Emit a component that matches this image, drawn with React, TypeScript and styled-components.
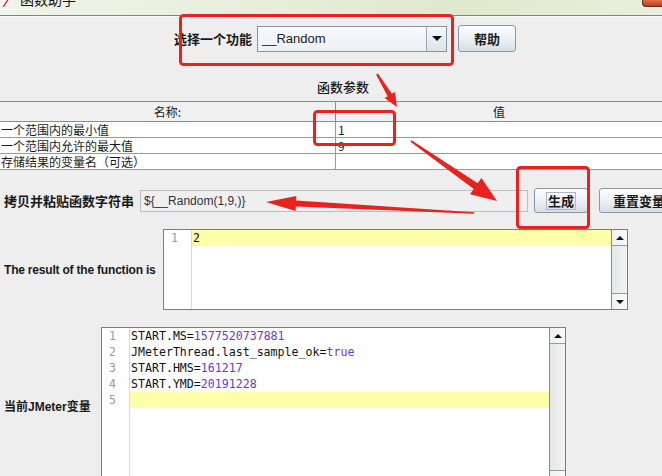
import React from "react";
import styled, { createGlobalStyle } from "styled-components";

const CJK = `"Noto Sans CJK SC", "Noto Sans", sans-serif`;
const SANS = `"Liberation Sans", "Noto Sans CJK SC", sans-serif`;
const MONO = `"DejaVu Sans Mono", "Liberation Mono", monospace`;

const GlobalStyle = createGlobalStyle`
  html, body {
    margin: 0;
    padding: 0;
    background: #eeeeee;
    overflow: hidden;
  }
`;

const Page = styled.div`
  position: relative;
  width: 662px;
  height: 476px;
  overflow: hidden;
  background: #eeeeee;
  color: #111;
`;

const TitleBar = styled.div`
  height: 15px;
  display: flex;
  align-items: flex-start;
  overflow: hidden;
  background: linear-gradient(90deg, #f1f4ea 0%, #e7eed9 40%, #dfe9cc 70%, #e9efdd 100%);
  border-bottom: 1px solid #7d8679;
  box-shadow: 0 1px 0 #fafafa;
`;

const TitleText = styled.span`
  margin: -9px 0 0 11px;
  font: 14px/16px ${CJK};
  color: #111;
`;

const CloseButton = styled.div`
  margin-left: auto;
  width: 19px;
  height: 6px;
  background: linear-gradient(#e0704a, #b9391f);
  border: 1px solid #6b2a1a;
  border-top: none;
  border-right: none;
  border-radius: 0 0 0 4px;
`;

const Row = styled.div<{ $top: number; $h?: number; $left?: number }>`
  display: flex;
  align-items: center;
  margin-top: ${(p) => p.$top}px;
  height: ${(p) => (p.$h ? `${p.$h}px` : "auto")};
  padding-left: ${(p) => p.$left ?? 4}px;
`;

const Label = styled.span<{ $w?: number; $latin?: boolean; $tight?: boolean }>`
  flex: none;
  width: ${(p) => (p.$w ? `${p.$w}px` : "auto")};
  font-family: ${(p) => (p.$latin ? SANS : CJK)};
  font-weight: 700;
  font-size: ${(p) => (p.$latin ? 12 : 13)}px;
  letter-spacing: ${(p) => (p.$tight ? "-0.2px" : "normal")};
  line-height: 16px;
  color: #1a1a1a;
  white-space: nowrap;
`;

const Combo = styled.div`
  margin-left: 5px;
  width: 190px;
  height: 26px;
  box-sizing: border-box;
  display: flex;
  border: 1px solid #8796a6;
  background: linear-gradient(#f7f9fb, #edf1f5);
`;

const ComboText = styled.span`
  flex: 1;
  padding-left: 4px;
  font: 13px/24px ${SANS};
  color: #1a1a1a;
`;

const ComboArrow = styled.div`
  width: 19px;
  display: flex;
  align-items: center;
  justify-content: center;
  border-left: 1px solid #9aa6b2;
  background: linear-gradient(#f6f8fa, #dde3ea);

  &::after {
    content: "";
    border-left: 5px solid transparent;
    border-right: 5px solid transparent;
    border-top: 5px solid #111;
  }
`;

const Button = styled.button<{ $w: number; $ml: number; $h?: number }>`
  flex: none;
  margin-left: ${(p) => p.$ml}px;
  width: ${(p) => p.$w}px;
  height: ${(p) => p.$h ?? 27}px;
  padding: 0;
  display: flex;
  align-items: center;
  justify-content: center;
  border: 1px solid #8797a8;
  border-radius: 3px;
  background: linear-gradient(#fdfeff 0%, #eef2f6 45%, #d6dee7 100%);
  font: 700 13px/16px ${CJK};
  color: #1a1a1a;
  white-space: nowrap;
  overflow: hidden;
`;

const FocusRing = styled.span`
  padding: 0 1px;
  border: 1px solid #a9b8c9;
`;

const SectionTitle = styled.div`
  margin-top: 27px;
  padding-left: 317px;
  font: 500 13px/16px ${CJK};
  color: #1a1a1a;
`;

const Table = styled.div`
  margin-top: 6px;
  display: grid;
  grid-template-columns: 336px 1fr;
  border-top: 1px solid #8c8c8c;
`;

const HeadCell = styled.div<{ $first?: boolean }>`
  height: 19px;
  display: flex;
  align-items: center;
  justify-content: center;
  background: #f0f0f0;
  border-bottom: 1px solid #8c8c8c;
  border-right: ${(p) => (p.$first ? "1px solid #8c8c8c" : "none")};
  font: 12px/15px ${CJK};
  color: #1a1a1a;
`;

const Cell = styled.div<{ $first?: boolean }>`
  height: 15px;
  padding-left: ${(p) => (p.$first ? 1 : 2)}px;
  background: #fff;
  border-bottom: 1px solid #9a9a9a;
  border-right: ${(p) => (p.$first ? "1px solid #9a9a9a" : "none")};
  font: 12px/15px ${CJK};
  color: #1a1a1a;
  white-space: nowrap;
  overflow: hidden;
`;

const Field = styled.div`
  flex: none;
  margin-left: 6px;
  width: 388px;
  height: 22px;
  box-sizing: border-box;
  padding-left: 3px;
  border: 1px solid #b8bfc7;
  background: #efefef;
  font: 12px/20px ${SANS};
  color: #333;
`;

const Editor = styled.div<{ $h: number }>`
  flex: none;
  margin-left: 6px;
  width: 465px;
  height: ${(p) => p.$h}px;
  box-sizing: border-box;
  display: flex;
  border: 1px solid #7d7d7d;
  background: #fff;
`;

const Gutter = styled.div`
  width: 27px;
  border-right: 1px solid #dadada;
  font: 11.5px/16px ${MONO};
  color: #9a9a9a;
  text-align: right;
`;

const GutterNum = styled.div`
  height: 16px;
  padding-right: 13px;
`;

const Code = styled.div`
  flex: 1;
  font: 11.6px/16px ${MONO};
  color: #111;
`;

const Line = styled.div<{ $hl?: boolean }>`
  height: 16px;
  padding-left: 1px;
  white-space: pre;
  background: ${(p) => (p.$hl ? "#ffffaa" : "transparent")};
`;

const Value = styled.span`
  color: #7236c8;
`;

const Scrollbar = styled.div`
  width: 15px;
  display: flex;
  flex-direction: column;
  border-left: 1px solid #8a8a8a;
  background: linear-gradient(90deg, #e4e6e9, #f1f2f4);
`;

const ScrollTrack = styled.div`
  flex: 1;
`;

const ScrollArrow = styled.div<{ $down?: boolean }>`
  height: 15px;
  display: flex;
  align-items: center;
  justify-content: center;
  background: linear-gradient(90deg, #eef0f2, #f8f9fa);
  border-bottom: ${(p) => (p.$down ? "none" : "1px solid #9a9a9a")};
  border-top: ${(p) => (p.$down ? "1px solid #9a9a9a" : "none")};

  &::after {
    content: "";
    border-left: 4px solid transparent;
    border-right: 4px solid transparent;
    ${(p) => (p.$down ? "border-top: 4px solid #111;" : "border-bottom: 4px solid #111;")}
  }
`;

const Overlay = styled.svg`
  position: absolute;
  left: 0;
  top: 0;
  pointer-events: none;
`;

type Pt = [number, number];

// tapered arrow: thin tail, thick shaft near the head, triangular head
const arrowPoints = (tail: Pt, tip: Pt, w0: number, w1: number, hl: number, hw: number) => {
  const dx = tip[0] - tail[0];
  const dy = tip[1] - tail[1];
  const len = Math.hypot(dx, dy);
  const ux = dx / len;
  const uy = dy / len;
  const nx = -uy;
  const ny = ux;
  const bx = tip[0] - ux * hl;
  const by = tip[1] - uy * hl;
  const pts: Pt[] = [
    [tail[0] + (nx * w0) / 2, tail[1] + (ny * w0) / 2],
    [bx + (nx * w1) / 2, by + (ny * w1) / 2],
    [bx + (nx * hw) / 2, by + (ny * hw) / 2],
    tip,
    [bx - (nx * hw) / 2, by - (ny * hw) / 2],
    [bx - (nx * w1) / 2, by - (ny * w1) / 2],
    [tail[0] - (nx * w0) / 2, tail[1] - (ny * w0) / 2],
  ];
  return pts.map((p) => `${p[0].toFixed(1)},${p[1].toFixed(1)}`).join(" ");
};

const RED = "#e8221e";

const resultLines = ["2"];

const varLines: [string, string][] = [
  ["START.MS=", "1577520737881"],
  ["JMeterThread.last_sample_ok=", "true"],
  ["START.HMS=", "161217"],
  ["START.YMD=", "20191228"],
  ["", ""],
];

const params = [
  ["一个范围内的最小值", "1"],
  ["一个范围内允许的最大值", "9"],
  ["存储结果的变量名（可选）", ""],
];

const App = () => {
  return (
    <Page>
      <GlobalStyle />
      <TitleBar>
        <svg width="8" height="8" viewBox="0 0 8 8" style={{ flex: "none", marginLeft: 1 }}>
          <path d="M6 0 L7.5 0 L3 7 L1.5 7 Z" fill="#c8243c" />
        </svg>
        <TitleText>函数助手</TitleText>
        <CloseButton />
      </TitleBar>

      <Row $top={9} $h={27} $left={174}>
        <Label>选择一个功能</Label>
        <Combo>
          <ComboText>__Random</ComboText>
          <ComboArrow />
        </Combo>
        <Button $w={58} $ml={11}>帮助</Button>
      </Row>

      <SectionTitle>函数参数</SectionTitle>

      <Table>
        <HeadCell $first>名称:</HeadCell>
        <HeadCell>值</HeadCell>
        {params.map(([name, value]) => (
          <React.Fragment key={name}>
            <Cell $first>{name}</Cell>
            <Cell>{value}</Cell>
          </React.Fragment>
        ))}
      </Table>

      <Row $top={18} $h={25}>
        <Label>拷贝并粘贴函数字符串</Label>
        <Field>{"${__Random(1,9,)}"}</Field>
        <Button $w={54} $ml={6} $h={25}>
          <FocusRing>生成</FocusRing>
        </Button>
        <Button $w={80} $ml={11} $h={25}>重置变量</Button>
      </Row>

      <Row $top={16}>
        <Label $latin $tight $w={153}>The result of the function is</Label>
        <Editor $h={81}>
          <Gutter>
            {resultLines.map((_, i) => (
              <GutterNum key={i}>{i + 1}</GutterNum>
            ))}
          </Gutter>
          <Code>
            {resultLines.map((l, i) => (
              <Line key={i} $hl={i === 0}>{l}</Line>
            ))}
          </Code>
          <Scrollbar>
            <ScrollArrow />
            <ScrollTrack />
            <ScrollArrow $down />
          </Scrollbar>
        </Editor>
      </Row>

      <Row $top={17}>
        <Label $latin $w={91}>当前JMeter变量</Label>
        <Editor $h={160}>
          <Gutter>
            {varLines.map((_, i) => (
              <GutterNum key={i}>{i + 1}</GutterNum>
            ))}
          </Gutter>
          <Code>
            {varLines.map(([k, v], i) => (
              <Line key={i} $hl={i === 4}>
                {k}
                <Value>{v}</Value>
              </Line>
            ))}
          </Code>
          <Scrollbar>
            <ScrollArrow />
            <ScrollTrack />
            <ScrollArrow $down />
          </Scrollbar>
        </Editor>
      </Row>

      <Overlay width="662" height="476" viewBox="0 0 662 476">
        <g fill="none" stroke={RED} strokeWidth="3">
          <rect x="180.5" y="15.5" width="272" height="49" rx="3" />
          <rect x="314.5" y="111.5" width="80" height="33" rx="3" />
          <rect x="517.5" y="167.5" width="71" height="60" rx="3" />
        </g>
        <g fill={RED}>
          <polygon points={arrowPoints([377, 74], [397, 107], 2, 5, 14, 12)} />
          <polygon points={arrowPoints([411, 141], [497, 201], 2, 7, 26, 20)} />
          <polygon points={arrowPoints([474, 213], [266, 202], 1.5, 6, 30, 15)} />
        </g>
      </Overlay>
    </Page>
  );
};

export default App;
